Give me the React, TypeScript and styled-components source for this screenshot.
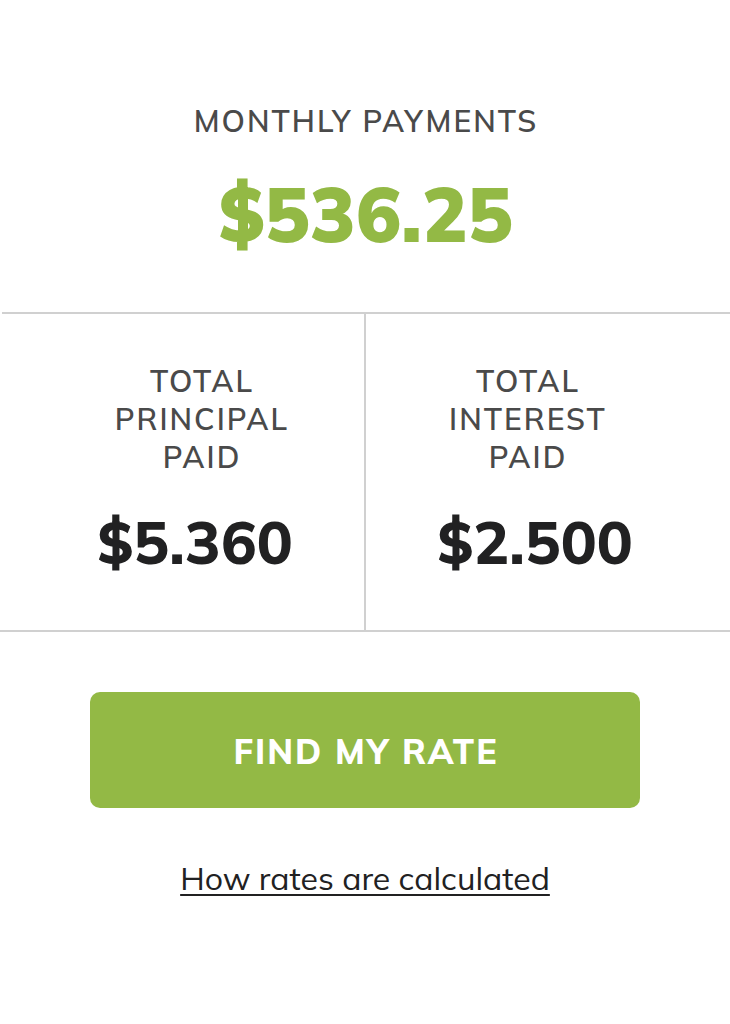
import React from "react";
import styled, { createGlobalStyle } from "styled-components";

const GlobalStyle = createGlobalStyle`
  *, *::before, *::after { box-sizing: border-box; }
  body {
    margin: 0;
    background: #ffffff;
    color: #212122;
    font-family: "Mulish", "Muli", Lato, sans-serif;
  }
`;

const Calculator = styled.main`
  display: flex;
  flex-direction: column;
  padding: 102px 0 120px;
`;

const Label = styled.h2`
  margin: 0;
  color: #4a4a4a;
  font-size: 30px;
  font-weight: 600;
  line-height: 38px;
  letter-spacing: 2px;
  text-transform: uppercase;
`;

/* Dollar sign whose bar runs unbroken through the S */
const Dollar = styled.span`
  position: relative;

  &::after {
    content: "";
    position: absolute;
    top: 50%;
    left: 52%;
    width: var(--bar-width);
    height: var(--bar-height);
    background: currentColor;
    transform: translate(-50%, -50%);
  }
`;

const AmountText = styled.p<{ $primary?: boolean }>`
  --bar-width: ${({ $primary }) => ($primary ? 10 : 7)}px;
  --bar-height: ${({ $primary }) => ($primary ? 54 : 42)}px;
  margin: 0;
  color: ${({ $primary }) => ($primary ? "#93b945" : "#212122")};
  font-size: ${({ $primary }) => ($primary ? 76 : 60)}px;
  font-weight: ${({ $primary }) => ($primary ? 900 : 800)};
  line-height: ${({ $primary }) => ($primary ? 100 : 76)}px;
`;

const Monthly = styled.section`
  display: flex;
  flex-direction: column;
  align-items: center;
  gap: 24px;
  margin-left: 2px;
  padding-bottom: 48px;
  border-bottom: 2px solid #d0d0d0;
  text-align: center;
`;

const Totals = styled.div`
  display: grid;
  grid-template-columns: 1fr 2px 1fr;
  border-bottom: 2px solid #d0d0d0;
`;

const Divider = styled.div`
  background: #d0d0d0;
`;

const Total = styled.section<{ $outer: "left" | "right" }>`
  display: flex;
  flex-direction: column;
  align-items: center;
  gap: 28px;
  padding: 48px 0 50px;
  padding-${({ $outer }) => $outer}: 26px;
  text-align: center;

  ${Label} {
    max-width: 220px;
    padding-${({ $outer }) => $outer}: 14px;
  }
`;

const Actions = styled.div`
  display: flex;
  flex-direction: column;
  align-items: center;
  gap: 50px;
  padding: 60px 90px 0;
`;

const RateButton = styled.button`
  width: 100%;
  height: 116px;
  padding: 2px 0 0 2px;
  border: 0;
  border-radius: 10px;
  background: #93b945;
  color: #ffffff;
  font-family: inherit;
  font-size: 34px;
  font-weight: 800;
  letter-spacing: 2px;
  text-transform: uppercase;
  cursor: pointer;
`;

const RateLink = styled.a`
  color: #212122;
  font-size: 32px;
  line-height: 40px;
  text-decoration: underline;
  text-decoration-thickness: 2px;
  text-underline-offset: 4px;
  text-decoration-skip-ink: none;
`;

function Amount({ value, primary }: { value: string; primary?: boolean }) {
  return (
    <AmountText $primary={primary}>
      <Dollar>$</Dollar>
      {value}
    </AmountText>
  );
}

export default function App() {
  return (
    <>
      <GlobalStyle />
      <Calculator>
        <Monthly>
          <Label>Monthly payments</Label>
          <Amount primary value="536.25" />
        </Monthly>
        <Totals>
          <Total $outer="left">
            <Label>Total principal paid</Label>
            <Amount value="5.360" />
          </Total>
          <Divider />
          <Total $outer="right">
            <Label>Total interest paid</Label>
            <Amount value="2.500" />
          </Total>
        </Totals>
        <Actions>
          <RateButton type="button">Find my rate</RateButton>
          <RateLink href="#rates">How rates are calculated</RateLink>
        </Actions>
      </Calculator>
    </>
  );
}
